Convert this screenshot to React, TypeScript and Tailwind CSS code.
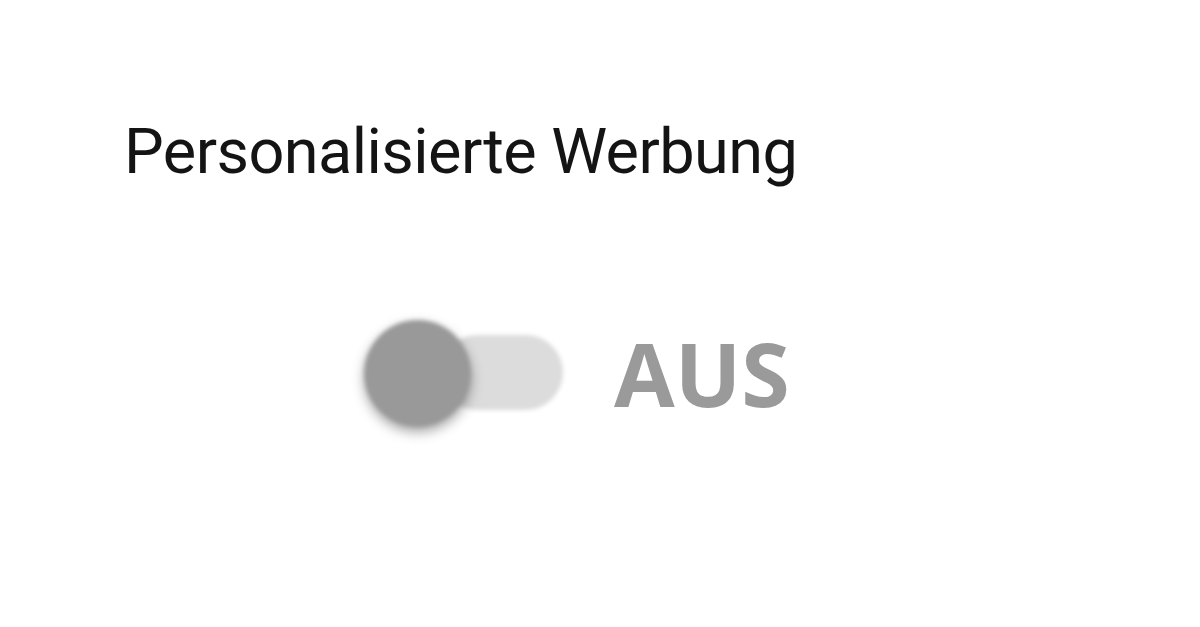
import { useState } from 'react';

// Settings card: one consent switch for personalised ads
export default function App() {
  const [enabled, setEnabled] = useState(false);

  return (
    <div className="h-[627px] w-[1200px] overflow-hidden bg-white">
      <div className="flex flex-col pl-[124px] pt-[112px]">
        <h1 className="text-[63px] leading-[80px] tracking-[-0.55px] text-[#141414] [font-family:Roboto,sans-serif]">
          Personalisierte Werbung
        </h1>

        <div className="ml-[240px] mt-[128px] flex items-center gap-[50px]">
          <button
            type="button"
            onClick={() => setEnabled(!enabled)}
            className="relative h-[107px] w-[200px] blur-[2px]"
          >
            <span className="absolute left-[76px] top-[15px] h-[75px] w-[123px] rounded-full bg-[#dcdcdc]" />
            <span className="absolute left-0 top-0 h-[107px] w-[107px] rounded-full bg-[#999999] shadow-[0_5px_12px_rgba(0,0,0,0.35)]" />
          </button>
          <span className="-mt-[2px] text-[88px] font-bold leading-none text-[#9a9a9a] [font-family:'Open_Sans',sans-serif]">
            {enabled ? 'AN' : 'AUS'}
          </span>
        </div>
      </div>
    </div>
  );
}
